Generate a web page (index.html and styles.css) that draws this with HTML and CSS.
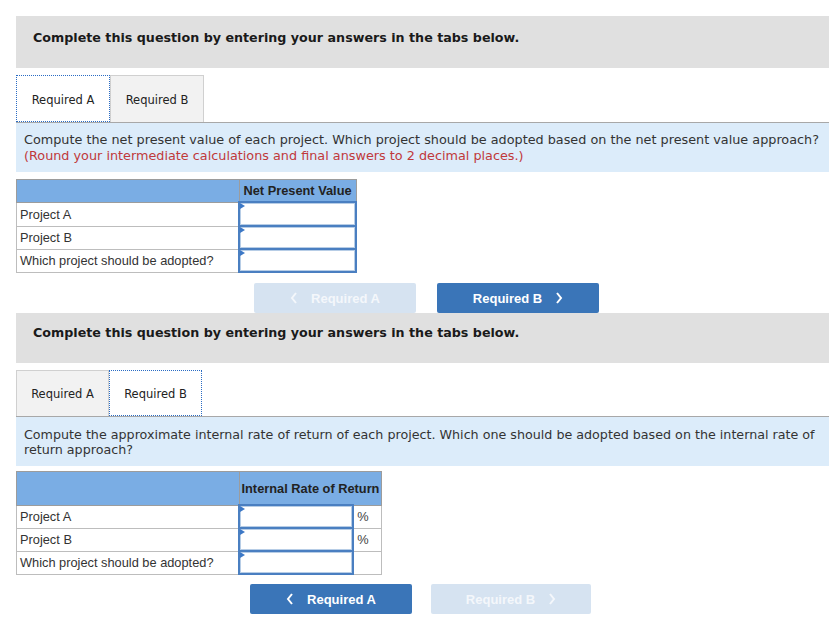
FILE: index.html
```html
<!DOCTYPE html>
<html lang="en">
<head>
    <meta charset="UTF-8">
    <meta name="viewport" content="width=device-width, initial-scale=1.0">
    <title>Capital Budgeting</title>
    <link rel="stylesheet" href="styles.css">
</head>
<body>
    <div class="question">
        <div class="prompt">Complete this question by entering your answers in the tabs below.</div>
        <div class="tabs">
            <div class="tab active">Required A</div>
            <div class="tab">Required B</div>
        </div>
        <div class="instructions">
            <div class="line">Compute the net present value of each project. Which project should be adopted based on the net present value approach?</div>
            <div class="note">(Round your intermediate calculations and final answers to 2 decimal places.)</div>
        </div>
        <table class="answer npv">
            <tr class="head"><th></th><th>Net Present Value</th></tr>
            <tr><td class="label">Project A</td><td class="input"></td></tr>
            <tr><td class="label">Project B</td><td class="input"></td></tr>
            <tr><td class="label">Which project should be adopted?</td><td class="input"></td></tr>
        </table>
        <div class="nav nav-a">
            <button class="disabled"><svg class="chev left" width="8" height="12" viewBox="0 0 8 12"><polyline points="6,1 2,6 6,11" /></svg>Required A</button>
            <button>Required B<svg class="chev right" width="8" height="12" viewBox="0 0 8 12"><polyline points="2,1 6,6 2,11" /></svg></button>
        </div>
    </div>

    <div class="question">
        <div class="prompt second">Complete this question by entering your answers in the tabs below.</div>
        <div class="tabs second">
            <div class="tab">Required A</div>
            <div class="tab active">Required B</div>
        </div>
        <div class="instructions second">
            Compute the approximate internal rate of return of each project. Which one should be adopted based on the internal rate of return approach?
        </div>
        <table class="answer irr">
            <tr class="head"><th></th><th colspan="2">Internal Rate of Return</th></tr>
            <tr><td class="label">Project A</td><td class="input"></td><td class="unit">%</td></tr>
            <tr><td class="label">Project B</td><td class="input"></td><td class="unit">%</td></tr>
            <tr><td class="label">Which project should be adopted?</td><td class="input"></td><td class="unit"></td></tr>
        </table>
        <div class="nav nav-b">
            <button><svg class="chev left" width="8" height="12" viewBox="0 0 8 12"><polyline points="6,1 2,6 6,11" /></svg>Required A</button>
            <button class="disabled">Required B<svg class="chev right" width="8" height="12" viewBox="0 0 8 12"><polyline points="2,1 6,6 2,11" /></svg></button>
        </div>
    </div>
</body>
</html>
```

FILE: styles.css
```css
body {
    margin: 0;
    padding: 16px 0 0 16px;
    font-family: "DejaVu Sans", Verdana, sans-serif;
    color: #222;
    background: white;
}
.question {
    width: 813px;
}
.prompt {
    background: #e0e0e0;
    height: 52px;
    box-sizing: border-box;
    padding: 14px 0 0 17px;
    font-size: 12.7px;
    font-weight: bold;
    color: #1a1a1a;
}
.prompt.second {
    height: 50px;
    padding-top: 12px;
}
.tabs {
    display: flex;
    margin-top: 7px;
    height: 47px;
}
.tabs.second {
    height: 46px;
}
.tab {
    box-sizing: border-box;
    width: 94px;
    height: 100%;
    padding-top: 17px;
    text-align: center;
    font-size: 11.5px;
    color: #222;
    background: #f2f2f2;
    border: 1px solid #d0d0d0;
    border-bottom: none;
}
.tabs.second .tab {
    width: 93px;
    padding-top: 16px;
}
.tab.active {
    background: white;
    border: 1px dotted #2a6cc4;
}
.instructions {
    background: #dcecfa;
    border-top: 1px solid #a8a8a8;
    height: 50px;
    box-sizing: border-box;
    padding: 9px 0 0 8px;
    font-size: 12.8px;
    line-height: 16px;
    color: #333;
}
.instructions .line {
    white-space: nowrap;
}
.instructions.second {
    font-size: 12.7px;
    line-height: 15px;
    padding-top: 10px;
}
.note {
    color: #c0393b;
}
.answer {
    border-collapse: collapse;
    margin-top: 7px;
    font-family: "Liberation Sans", Arial, sans-serif;
    font-size: 12.8px;
}
.answer th {
    background: #7aade4;
    border: 1px solid #9c9c9c;
    font-weight: bold;
    color: #222;
    height: 21px;
    padding: 0 4px;
    white-space: nowrap;
}
.answer td {
    border: 1px solid #bdbdbd;
    height: 21px;
    padding: 0;
}
.answer tr.head + tr td {
    height: 22px;
}
.answer td.label {
    width: 218px;
    padding-left: 3px;
    color: #333;
}
.answer td.input {
    position: relative;
    background: white;
    border: 2px solid #4a7fc1;
    box-shadow: inset 0 0 0 1px #b7cde6;
}
.answer td.input::before {
    content: "";
    position: absolute;
    left: 0;
    top: 0;
    border-left: 5px solid #3c78c6;
    border-top: 3px solid transparent;
    border-bottom: 3px solid transparent;
}
.npv td.input {
    width: 114px;
}
.irr {
    margin-top: 5px;
}
.irr th {
    height: 32px;
    padding: 0 2px;
}
.irr tr.head + tr td {
    height: 21px;
}
.irr td.input {
    width: 111px;
}
.irr td.unit {
    width: 24px;
    padding-left: 3px;
    color: #444;
}
.nav {
    display: flex;
    gap: 21px;
    margin-top: 10px;
}
.nav-a {
    padding-left: 238px;
}
.nav-b {
    margin-top: 9px;
    padding-left: 234px;
    gap: 19px;
}
.nav button {
    display: flex;
    align-items: center;
    justify-content: center;
    width: 162px;
    height: 30px;
    border: none;
    border-radius: 2px;
    background: #3a75b8;
    color: white;
    font-family: "Liberation Sans", Arial, sans-serif;
    font-size: 13px;
    font-weight: bold;
    cursor: pointer;
}
.nav button.disabled {
    background: #d6e3f1;
    color: #f4f7fb;
}
.nav-b button.disabled {
    width: 160px;
}
.chev polyline {
    fill: none;
    stroke: currentColor;
    stroke-width: 2;
}
.chev.left {
    margin-right: 13px;
}
.chev.right {
    margin-left: 13px;
}
```
